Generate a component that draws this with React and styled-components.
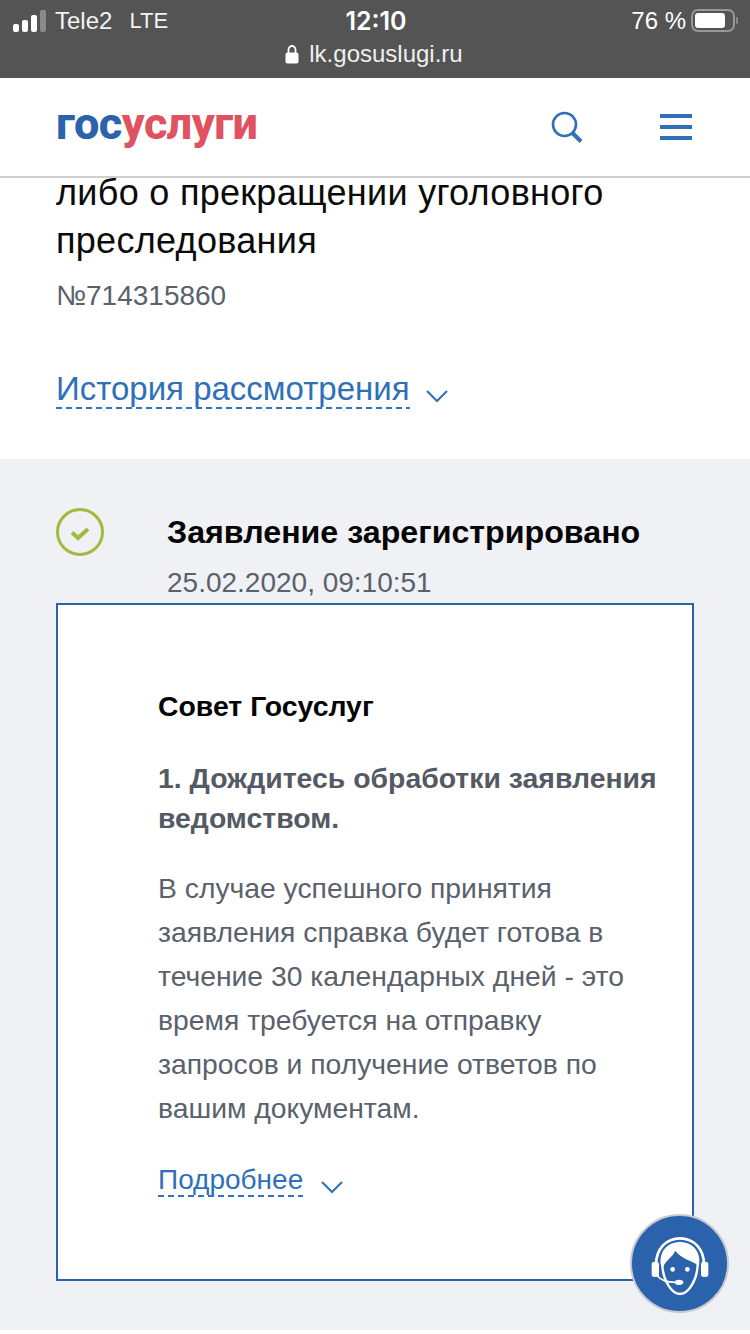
import React from "react";
import styled, { createGlobalStyle } from "styled-components";

const Global = createGlobalStyle`
  html, body { margin: 0; padding: 0; background: #fff; }
  body { font-family: "Liberation Sans", Arial, sans-serif; }
`;

const Page = styled.div`
  position: relative;
  width: 750px;
  height: 1334px;
  overflow: hidden;
  background: #fff;
  display: flex;
  flex-direction: column;
`;

const StatusBar = styled.div`
  height: 78px;
  flex: none;
  background: #545454;
  color: #fff;
  display: flex;
  flex-direction: column;
  position: relative;
  z-index: 3;
`;

const StatusRow = styled.div`
  height: 41px;
  display: grid;
  grid-template-columns: 1fr auto 1fr;
  align-items: center;
  padding: 0 11px 0 13px;
  font-size: 24px;
`;

const Carrier = styled.div`
  display: flex;
  align-items: center;
  gap: 9px;
  color: #f2f2f2;
`;

const CarrierName = styled.span`
  margin-right: 8px;
`;

const Network = styled.span`
  font-size: 22px;
`;

const Clock = styled.div`
  font-size: 25px;
  font-family: "Inter", sans-serif;
  font-weight: 600;
`;

const Battery = styled.div`
  display: flex;
  align-items: center;
  justify-content: flex-end;
  gap: 5px;
`;

const UrlRow = styled.div`
  display: flex;
  justify-content: center;
  align-items: center;
  gap: 10px;
  font-size: 24px;
  color: #efefef;
  height: 26px;
  padding-right: 2px;
`;

const Header = styled.header`
  height: 98px;
  flex: none;
  background: #fff;
  border-bottom: 2px solid #cfcfcf;
  display: flex;
  align-items: center;
  padding: 0 58px 0 56px;
  position: relative;
  z-index: 2;
`;

const Logo = styled.div`
  font-family: "Roboto", sans-serif;
  font-weight: 800;
  font-size: 45px;
  line-height: 1;
  letter-spacing: -0.5px;
  margin-top: -8px;
  color: #e0525f;
  flex: 1;
`;

const LogoBlue = styled.span`
  color: #2a62ac;
`;

const HeaderIcons = styled.div`
  display: flex;
  align-items: center;
  gap: 77px;
`;

const Intro = styled.section`
  height: 281px;
  flex: none;
  padding: 0 56px;
  box-sizing: border-box;
`;

const Title = styled.h1`
  margin: -9px 0 0;
  font-size: 36px;
  line-height: 48px;
  letter-spacing: 0.3px;
  font-weight: 400;
  color: #0b0b0b;
`;

const Number = styled.div`
  margin-top: 15px;
  font-size: 28px;
  line-height: 32px;
  color: #5a616b;
`;

const ToggleRow = styled.div`
  display: flex;
  align-items: center;
  gap: ${(p) => p.$gap}px;
  margin-top: ${(p) => p.$top}px;
`;

const DashedLink = styled.span`
  color: #2f70b8;
  font-size: ${(p) => p.$size}px;
  line-height: ${(p) => p.$line}px;
  padding-bottom: 2px;
  background: linear-gradient(to right, #2f74c0 6px, transparent 6px) left bottom / 10px 2px repeat-x;
`;

const ChevronIcon = styled.svg`
  margin-top: 12px;
`;

const Section = styled.section`
  flex: 1;
  background: #f0f1f5;
  padding: 0 56px;
  margin-bottom: 4px;
`;

const StatusLine = styled.div`
  display: grid;
  grid-template-columns: 111px 1fr;
  padding-top: 49px;
`;

const StatusTitle = styled.div`
  margin-top: 1px;
  font-size: 32.200px;
  line-height: 46px;
  font-weight: 700;
  color: #050505;
`;

const StatusDate = styled.div`
  font-size: 28px;
  line-height: 32px;
  margin-top: 12px;
  color: #5a616b;
`;

const Card = styled.div`
  box-sizing: border-box;
  width: 638px;
  height: 678px;
  margin-top: 4px;
  background: #fff;
  border: 2px solid #2a62ac;
  padding: 81px 28px 0 100px;
`;

const CardTitle = styled.div`
  font-size: 28.400px;
  line-height: 40px;
  font-weight: 700;
  color: #050505;
`;

const StepTitle = styled.div`
  margin-top: 32px;
  font-size: 28.400px;
  line-height: 40px;
  font-weight: 700;
  color: #535a64;
`;

const Body = styled.div`
  margin-top: 28px;
  font-size: 28.300px;
  line-height: 44px;
  color: #5a616b;
`;

const ChatButton = styled.div`
  position: absolute;
  left: 630px;
  top: 1214px;
  width: 99px;
  height: 99px;
  box-sizing: border-box;
  border-radius: 50%;
  background: #2a62ac;
  border: 2px solid #c8c9cc;
  display: flex;
  align-items: center;
  justify-content: center;
`;

const AgentIcon = styled.svg`
  margin-top: 2px;
`;

const Chevron = () => (
  <ChevronIcon width="22" height="14" viewBox="0 0 22 14" fill="none" stroke="#2f70b8" strokeWidth="2">
    <path d="M1 2l10 10L21 2" />
  </ChevronIcon>
);

export default function App() {
  return (
    <Page>
      <Global />
      <StatusBar>
        <StatusRow>
          <Carrier>
            <svg width="33" height="22" viewBox="0 0 33 22">
              <rect x="0" y="14" width="6" height="8" rx="2" fill="#fff" />
              <rect x="9" y="10" width="6" height="12" rx="2" fill="#fff" />
              <rect x="18" y="5" width="6" height="17" rx="2" fill="#fff" />
              <rect x="27" y="0" width="6" height="22" rx="2" fill="#8a8a8a" />
            </svg>
            <CarrierName>Tele2</CarrierName>
            <Network>LTE</Network>
          </Carrier>
          <Clock>12:10</Clock>
          <Battery>
            <span>76 %</span>
            <svg width="48" height="24" viewBox="0 0 48 24">
              <rect x="1" y="1" width="42" height="21" rx="6" fill="none" stroke="#979797" strokeWidth="2" />
              <rect x="4" y="4" width="30" height="15" rx="3" fill="#fff" />
              <rect x="45" y="8" width="2" height="7" rx="1" fill="#8a8a8a" />
            </svg>
          </Battery>
        </StatusRow>
        <UrlRow>
          <svg width="14" height="20" viewBox="0 0 14 20">
            <path d="M3.5 9V5.500a3.500 3.500 0 0 1 7 0V9" fill="none" stroke="#fff" strokeWidth="1.800" />
            <rect x="0.500" y="8.500" width="13" height="11" rx="2" fill="#fff" />
          </svg>
          <span>lk.gosuslugi.ru</span>
        </UrlRow>
      </StatusBar>
      <Header>
        <Logo>
          <LogoBlue>гос</LogoBlue>услуги
        </Logo>
        <HeaderIcons>
          <svg width="32" height="32" viewBox="0 0 32 32" fill="none" stroke="#2f70b8">
            <circle cx="13.500" cy="13.500" r="11.500" strokeWidth="2.600" />
            <path d="M21.500 22L30 30.500" strokeWidth="4" />
          </svg>
          <svg width="32" height="26" viewBox="0 0 32 26" fill="#2f70b8">
            <rect y="0" width="32" height="4" />
            <rect y="11" width="32" height="4" />
            <rect y="22" width="32" height="4" />
          </svg>
        </HeaderIcons>
      </Header>
      <Intro>
        <Title>
          либо о прекращении уголовного
          <br />
          преследования
        </Title>
        <Number>№714315860</Number>
        <ToggleRow $gap={16} $top={58}>
          <DashedLink $size={33} $line={37}>История рассмотрения</DashedLink>
          <Chevron />
        </ToggleRow>
      </Intro>
      <Section>
        <StatusLine>
          <svg width="48" height="48" viewBox="0 0 48 48" fill="none">
            <circle cx="24" cy="24" r="22.500" stroke="#a2bb3e" strokeWidth="3" />
            <path d="M16 24.500l6 5.500 10-9" stroke="#a2bb3e" strokeWidth="4" />
          </svg>
          <div>
            <StatusTitle>Заявление зарегистрировано</StatusTitle>
            <StatusDate>25.02.2020, 09:10:51</StatusDate>
          </div>
        </StatusLine>
        <Card>
          <CardTitle>Совет Госуслуг</CardTitle>
          <StepTitle>
            1. Дождитесь обработки заявления
            <br />
            ведомством.
          </StepTitle>
          <Body>
            В случае успешного принятия
            <br />
            заявления справка будет готова в
            <br />
            течение 30 календарных дней - это
            <br />
            время требуется на отправку
            <br />
            запросов и получение ответов по
            <br />
            вашим документам.
          </Body>
          <ToggleRow $gap={18} $top={35}>
            <DashedLink $size={28} $line={30}>Подробнее</DashedLink>
            <Chevron />
          </ToggleRow>
        </Card>
      </Section>
      <ChatButton>
        <AgentIcon width="70" height="70" viewBox="0 0 210 210" fill="none">
          <path d="M33 105C33 55 65 25 105 25C145 25 177 55 177 105" stroke="#fff" strokeWidth="8" />
          <rect x="20" y="95" width="22" height="46" rx="8" fill="#fff" />
          <rect x="168" y="95" width="22" height="46" rx="8" fill="#fff" />
          <path d="M52 100C52 150 80 192 105 192C130 192 158 150 158 100" stroke="#fff" strokeWidth="7" />
          <path d="M48 108C40 62 70 36 105 36C140 36 170 62 162 108C145 92 112 90 90 62C85 82 62 88 54 112Z" fill="#fff" />
          <circle cx="83" cy="118" r="7" fill="#fff" />
          <circle cx="127" cy="118" r="7" fill="#fff" />
          <path d="M38 138C48 152 68 157 92 157" stroke="#fff" strokeWidth="5" />
          <ellipse cx="102" cy="157" rx="13" ry="8" fill="#fff" />
        </AgentIcon>
      </ChatButton>
    </Page>
  );
}
